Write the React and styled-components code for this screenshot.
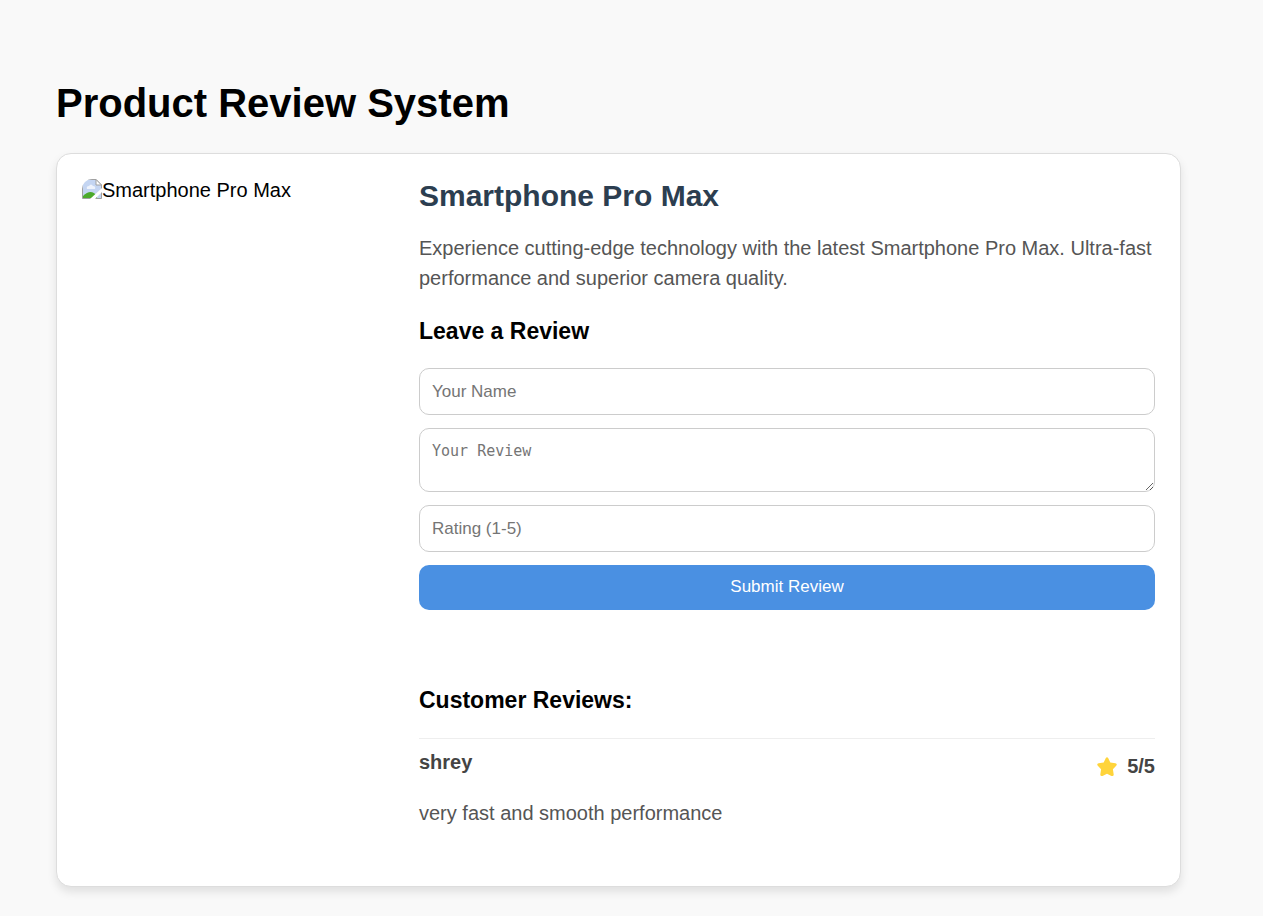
import React from "react";
import styled, { createGlobalStyle, css } from "styled-components";

const GlobalStyle = createGlobalStyle`
  *, *::before, *::after { box-sizing: border-box; }
  body {
    margin: 0;
    background: #f9f9f9;
    color: #000;
    font-family: "Liberation Sans", Arial, sans-serif;
    font-size: 20px;
    line-height: 30px;
  }
`;

const Page = styled.main`
  padding: 80px 82px 29px 56px;
`;

const PageTitle = styled.h1`
  margin: 0 0 26px;
  font-size: 40px;
  line-height: 47px;
`;

const ProductCard = styled.article`
  display: flex;
  gap: 25px;
  padding: 24px 25px;
  background: #fff;
  border: 1px solid #ddd;
  border-radius: 15px;
  box-shadow: 0 5px 10px rgba(0, 0, 0, 0.1);
`;

const ProductImage = styled.figure`
  display: flex;
  flex: 0 0 312px;
  height: 24px;
  margin: 0;
  line-height: 24px;
`;

const BrokenImageIcon = styled.svg`
  flex: none;
  width: 20px;
  height: 20px;
  margin-top: 1px;
  border-top-left-radius: 10px;
`;

const Details = styled.section`
  flex: 1;
  min-width: 0;
`;

const ProductName = styled.h2`
  margin: 0 0 20px;
  color: #2c3e50;
  font-size: 30px;
  line-height: 35px;
`;

const BodyText = styled.p`
  margin: 0 0 24px;
  color: #555;
`;

const SectionTitle = styled.h3`
  margin: 0;
  font-size: 23px;
  line-height: 28px;
`;

const ReviewForm = styled.form`
  display: flex;
  flex-direction: column;
  gap: 13px;
  margin: 23px 0 76px;
`;

const fieldStyle = css`
  display: block;
  width: 100%;
  margin: 0;
  padding: 12px;
  background: #fff;
  border: 1px solid #ccc;
  border-radius: 10px;
  font-size: 17px;
  &::placeholder { color: #757575; }
`;

const Field = styled.input`
  ${fieldStyle}
  height: 47px;
  font-family: inherit;
`;

const ReviewField = styled.textarea`
  ${fieldStyle}
  height: 64px;
  resize: vertical;
  font-family: "DejaVu Sans Mono", monospace;
  font-size: 15px;
  line-height: 20px;
`;

const SubmitButton = styled.button`
  height: 45px;
  padding: 0 12px 2px;
  background: #4a90e2;
  color: #fff;
  border: 0;
  border-radius: 10px;
  font-family: inherit;
  font-size: 17px;
  cursor: pointer;
`;

const ReviewList = styled.ul`
  margin: 24px 0 0;
  padding: 0;
  list-style: none;
`;

const Review = styled.li`
  padding: 12px 0 10px;
  border-top: 1px solid #eee;
`;

const ReviewHeader = styled.header`
  display: flex;
  justify-content: space-between;
  margin-bottom: 20px;
  color: #444;
  font-weight: bold;
  line-height: 23px;
`;

const Rating = styled.span`
  display: flex;
  align-items: center;
  gap: 10px;
  padding-top: 4px;
`;

const StarIcon = styled.svg`
  width: 20px;
  height: 20px;
  fill: #ffd43b;
`;

const FIELDS = [
  { id: "name", as: Field, type: "text", label: "Your Name" },
  { id: "review", as: ReviewField, label: "Your Review" },
  { id: "rating", as: Field, type: "number", label: "Rating (1-5)", min: 1, max: 5 },
];

const REVIEWS = [{ author: "shrey", rating: 5, text: "very fast and smooth performance" }];

function MissingPicture() {
  return (
    <BrokenImageIcon viewBox="0 0 20 20" aria-hidden="true">
      <path d="M.5 .5H14L19.500 6V19.500H.5Z" fill="#c4d5f2" stroke="#a0a0a0" />
      <path d="M5 10q-1-3 2-3q2-3 4 0q3 0 2 3Z" fill="#eef3fc" />
      <path d="M1 19v-2q8-8 14 0v2Z" fill="#4caa2c" />
      <path d="M8 20L20 9V13L13 20Z" fill="#fff" />
      <path d="M14 .5V6H19.500Z" fill="#fff" stroke="#a0a0a0" />
    </BrokenImageIcon>
  );
}

function Star() {
  return (
    <StarIcon viewBox="0 0 20 20" aria-hidden="true">
      <path d="M8.700 1.300q1.300-2 2.600 0L13.300 5.500L18.400 6.300Q20.700 7 19.200 8.800L15.900 12.200L16.700 17.400Q16.600 19.700 14.500 18.900L10 16.700L5.500 18.900Q3.400 19.700 3.300 17.400L4.100 12.200L.8 8.800Q-.7 7 1.600 6.300L6.700 5.500Z" />
    </StarIcon>
  );
}

export default function App() {
  return (
    <>
      <GlobalStyle />
      <Page>
        <PageTitle>Product Review System</PageTitle>
        <ProductCard>
          <ProductImage>
            <MissingPicture />
            <span>Smartphone Pro Max</span>
          </ProductImage>
          <Details>
            <ProductName>Smartphone Pro Max</ProductName>
            <BodyText>
              Experience cutting-edge technology with the latest Smartphone Pro Max. Ultra-fast
              performance and superior camera quality.
            </BodyText>
            <SectionTitle>Leave a Review</SectionTitle>
            <ReviewForm onSubmit={(event) => event.preventDefault()}>
              {FIELDS.map(({ as: Control, id, label, ...rest }) => (
                <Control key={id} id={id} name={id} aria-label={label} placeholder={label} {...rest} />
              ))}
              <SubmitButton type="submit">Submit Review</SubmitButton>
            </ReviewForm>
            <SectionTitle>Customer Reviews:</SectionTitle>
            <ReviewList>
              {REVIEWS.map(({ author, rating, text }) => (
                <Review key={author}>
                  <ReviewHeader>
                    <span>{author}</span>
                    <Rating>
                      <Star />
                      {rating}/5
                    </Rating>
                  </ReviewHeader>
                  <BodyText>{text}</BodyText>
                </Review>
              ))}
            </ReviewList>
          </Details>
        </ProductCard>
      </Page>
    </>
  );
}
